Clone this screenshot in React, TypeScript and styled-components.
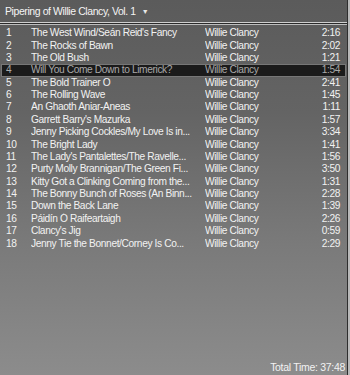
import React from "react";
import styled, { createGlobalStyle } from "styled-components";

const Global = createGlobalStyle`
  html, body { margin: 0; padding: 0; background: #6e6e6e; }
  body { font-family: "Liberation Sans", Arial, sans-serif; }
`;

const Frame = styled.div`
  width: 350px;
  height: 375px;
  box-sizing: border-box;
  border-right: 2px solid #b8b8b8;
  display: flex;
`;

const Panel = styled.div`
  flex: 1;
  display: flex;
  flex-direction: column;
  border-right: 1px solid #2e2e2e;
  background: linear-gradient(to bottom, #5b5b5b 0%, #646464 30%, #7a7a7a 65%, #8c8c8c 100%);
  color: #f2f2f2;
  font-size: 10.2px;
  letter-spacing: -0.38px;
  overflow: hidden;
`;

const Header = styled.div`
  height: 22px;
  display: flex;
  align-items: center;
  padding-left: 5px;
  font-size: 10.5px;
  letter-spacing: -0.42px;
  color: #f4f4f4;
  gap: 6px;
`;

const Caret = styled.span`
  font-size: 7px;
  color: #e8e8e8;
  margin-top: 1px;
`;

const Divider = styled.div`
  height: 1px;
  background: #2a2a2a;
  border-top: 1px solid #cfcfcf;
  border-bottom: 1px solid #bdbdbd;
`;

const List = styled.div`
  padding-top: 2px;
  display: flex;
  flex-direction: column;
`;

const Row = styled.div<{ $sel?: boolean }>`
  height: 12.375px;
  box-sizing: border-box;
  display: grid;
  grid-template-columns: 25px 174px 1fr auto;
  align-items: center;
  white-space: nowrap;
  color: ${(p) => (p.$sel ? "#a9a9a9" : "#f2f2f2")};
  background: ${(p) => (p.$sel ? "#1b1b1b" : "transparent")};
  outline: ${(p) => (p.$sel ? "1px solid #777" : "none")};
  outline-offset: -1px;
  margin: ${(p) => (p.$sel ? "0 1px" : "0")};
  padding-left: ${(p) => (p.$sel ? "5px" : "6px")};
  padding-right: ${(p) => (p.$sel ? "6px" : "7px")};
`;

const Cell = styled.span`
  overflow: hidden;
  text-overflow: ellipsis;
  line-height: 12px;
`;

const Time = styled.span`
  text-align: right;
  line-height: 12px;
`;

const Footer = styled.div`
  margin-top: auto;
  text-align: right;
  padding: 0 2px 2px 0;
  font-size: 10.5px;
  letter-spacing: -0.3px;
  line-height: 12px;
`;

const tracks: [string, string][] = [
  ["The West Wind/Seán Reid's Fancy", "2:16"],
  ["The Rocks of Bawn", "2:02"],
  ["The Old Bush", "1:21"],
  ["Will You Come Down to Limerick?", "1:54"],
  ["The Bold Trainer O", "2:41"],
  ["The Rolling Wave", "1:45"],
  ["An Ghaoth Aniar-Aneas", "1:11"],
  ["Garrett Barry's Mazurka", "1:57"],
  ["Jenny Picking Cockles/My Love Is in...", "3:34"],
  ["The Bright Lady", "1:41"],
  ["The Lady's Pantalettes/The Ravelle...", "1:56"],
  ["Purty Molly Brannigan/The Green Fi...", "3:50"],
  ["Kitty Got a Clinking Coming from the...", "1:31"],
  ["The Bonny Bunch of Roses (An Binn...", "2:28"],
  ["Down the Back Lane", "1:39"],
  ["Páidín Ó Raifeartaigh", "2:26"],
  ["Clancy's Jig", "0:59"],
  ["Jenny Tie the Bonnet/Corney Is Co...", "2:29"],
];

export default function App() {
  return (
    <>
      <Global />
      <Frame>
        <Panel>
          <Header>
            <span>Pipering of Willie Clancy, Vol. 1</span>
            <Caret>▼</Caret>
          </Header>
          <Divider />
          <List>
            {tracks.map(([title, time], i) => (
              <Row key={i} $sel={i === 3}>
                <Cell>{i + 1}</Cell>
                <Cell>{title}</Cell>
                <Cell>Willie Clancy</Cell>
                <Time>{time}</Time>
              </Row>
            ))}
          </List>
          <Footer>Total Time: 37:48</Footer>
        </Panel>
      </Frame>
    </>
  );
}
